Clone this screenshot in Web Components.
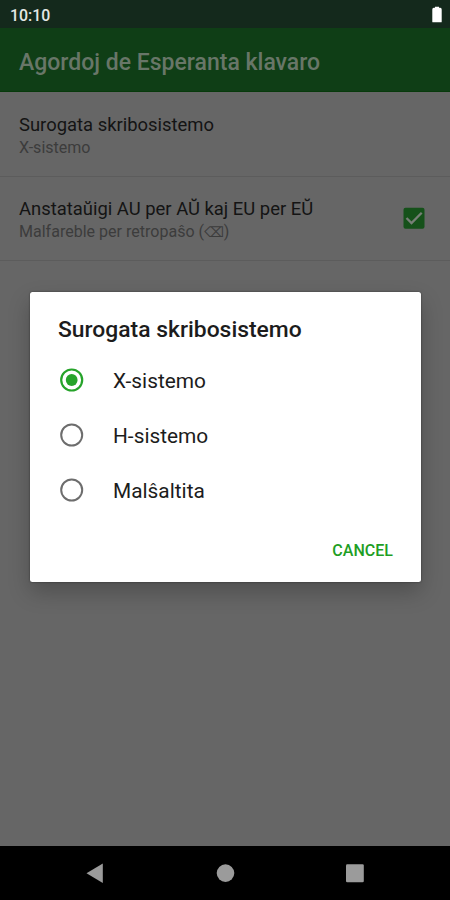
<!DOCTYPE html>
<html lang="eo">
<head>
<meta charset="utf-8">
<title>Agordoj de Esperanta klavaro</title>
<style>
html,body{margin:0;height:100%;overflow:hidden;background:#666;font-family:Roboto,"Noto Sans",sans-serif}
</style>
</head>
<body>
<settings-screen></settings-screen>
<script>
function define(name, html) {
  const tpl = document.createElement('template');
  tpl.innerHTML = html;
  customElements.define(name, class extends HTMLElement {
    constructor() {
      super();
      this.attachShadow({mode: 'open'}).append(tpl.content.cloneNode(true));
    }
  });
}

define('status-bar', `
<style>
:host{display:flex;flex:none;box-sizing:border-box;height:28px;padding:0 8px 0 10px;align-items:center;justify-content:space-between;background:#14291c;color:#e4e7e4;font-size:15.9px;font-weight:500;line-height:28px}
span{padding-top:3px}
svg{display:block;margin-top:1px}
</style>
<span><slot></slot></span>
<svg width="10" height="17" viewBox="0 0 10 17"><path d="M3 0.7h4v1.1h1.3q1.4 .4 1.4 1.600v12.400q0 .5-.5 .5H.8q-.5 0-.5-.5V3.400q0-1.200 1.400-1.600H3z" fill="#fff"/></svg>`);

define('app-bar', `
<style>
:host{display:flex;flex:none;box-sizing:border-box;height:64px;padding:5px 19px 0;align-items:center;background:#0f3e16;border-bottom:1px solid #083a0c;color:#687668;font-size:23px;font-weight:500;white-space:nowrap}
</style>
<span><slot></slot></span>`);

define('pref-row', `
<style>
:host{display:flex;flex:none;box-sizing:border-box;height:84.500px;padding:0 25px 0 19px;align-items:center;justify-content:space-between;border-bottom:1px solid #5c5c5c;white-space:nowrap}
.text{padding-top:4px}
.t{font-size:18.430px;line-height:24px;color:#141414}
.s{font-size:16.050px;line-height:22px;color:#3c3c3c}
</style>
<div class="text"><div class="t"><slot></slot></div><div class="s"><slot name="summary"></slot></div></div>
<slot name="widget"></slot>`);

define('check-box', `
<style>:host{display:block}svg{display:block}</style>
<svg width="22" height="22" viewBox="0 0 22 22"><rect x=".5" y=".8" width="21" height="21" rx="2" fill="#15511a"/><path d="M3.500 11l5 5L18.700 5.800" fill="none" stroke="#777f77" stroke-width="2.300"/></svg>`);

define('radio-option', `
<style>
:host{display:flex;height:55px;align-items:center;font-size:20.850px;color:#1c1c1c;white-space:nowrap}
svg{display:block;margin-right:29px}
circle{fill:none;stroke:#6d6d6d;stroke-width:2}
.dot{display:none}
:host([checked]) circle{stroke:#26a32a;stroke-width:2.200}
:host([checked]) .dot{display:block;fill:#26a32a;stroke:none}
span{padding-top:1px}
</style>
<svg width="24" height="24" viewBox="0 0 24 24"><circle cx="11.700" cy="12" r="10.500"/><circle class="dot" cx="11.700" cy="12" r="5.900"/></svg>
<span><slot></slot></span>`);

define('choice-dialog', `
<style>
:host{display:flex;flex-direction:column;box-sizing:border-box;width:390.500px;height:290.500px;background:#fff;border-radius:2.500px;box-shadow:0 0 2px rgba(0,0,0,.5),0 10px 22px rgba(0,0,0,.23);padding:23px 27.500px 0 28px}
.title{font-size:22.870px;font-weight:500;line-height:30px;color:#1c1c1c;white-space:nowrap}
.options{padding:10px 0 0 2px;margin-top:-2px}
.actions{display:flex;justify-content:flex-end;padding-top:22px;color:#1e9e24;font-size:16.050px;font-weight:500;line-height:22px}
</style>
<div class="title"><span><slot name="title"></slot></span></div>
<div class="options"><slot></slot></div>
<div class="actions"><span><slot name="action"></slot></span></div>`);

define('nav-bar', `
<style>
:host{display:block;flex:none;height:54.500px;background:#000}
svg{display:block}
</style>
<svg width="450" height="54" viewBox="0 0 450 54" fill="#9b9b9b"><path d="M86.500 27.300L102.800 17.500v19.600z"/><circle cx="225.500" cy="27.100" r="8.800"/><rect x="346" y="18.200" width="17.800" height="18" rx="1.300"/></svg>`);

define('settings-screen', `
<style>
:host{display:flex;flex-direction:column;position:relative;width:450px;height:900px;background:#666}
main{flex:1;display:flex;flex-direction:column}
.overlay{position:absolute;left:30px;top:291.500px}
.erase{font-family:"DejaVu Sans",sans-serif;font-size:14px;line-height:1}
</style>
<status-bar>10:10</status-bar>
<app-bar>Agordoj de Esperanta klavaro</app-bar>
<main>
<pref-row>Surogata skribosistemo<span slot="summary">X-sistemo</span></pref-row>
<pref-row>Anstataŭigi AU per AŬ kaj EU per EŬ<span slot="summary">Malfareble per retropaŝo (<span class="erase">⌫</span>)</span><check-box slot="widget"></check-box></pref-row>
</main>
<nav-bar></nav-bar>
<choice-dialog class="overlay">
<span slot="title">Surogata skribosistemo</span>
<radio-option checked>X-sistemo</radio-option>
<radio-option>H-sistemo</radio-option>
<radio-option>Malŝaltita</radio-option>
<span slot="action">CANCEL</span>
</choice-dialog>`);
</script>
</body>
</html>
